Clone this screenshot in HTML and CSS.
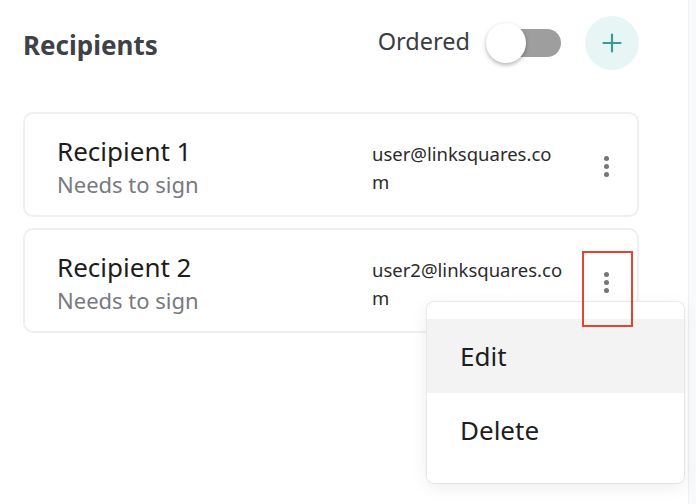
FILE: index.html
```html
<!DOCTYPE html>
<html lang="en">
<head>
	<meta charset="UTF-8">
	<title>Recipients</title>
	<link rel="stylesheet" href="styles.css">
</head>
<body>
	<div class="page">
		<div class="panel">
			<div class="head">
				<h2 class="title">Recipients</h2>
				<span class="ordered">Ordered</span>
				<span class="toggle"><span class="knob"></span></span>
				<a href="javascript:" class="add">
					<svg width="22" height="22" viewBox="0 0 22 22"><path d="M11 2.5v17M2.5 11h17" stroke="#3c9a9b" stroke-width="2.2" stroke-linecap="round" fill="none"/></svg>
				</a>
			</div>

			<ul class="list">
				<li class="card">
					<div class="who">
						<div class="name">Recipient 1</div>
						<div class="role">Needs to sign</div>
					</div>
					<div class="mail">user@linksquares.co<br>m</div>
					<span class="more"><i></i><i></i><i></i></span>
				</li>
				<li class="card">
					<div class="who">
						<div class="name">Recipient 2</div>
						<div class="role">Needs to sign</div>
					</div>
					<div class="mail">user2@linksquares.co<br>m</div>
					<span class="more"><i></i><i></i><i></i></span>
					<span class="mark"></span>
					<ul class="menu">
						<li class="on">Edit</li>
						<li>Delete</li>
					</ul>
				</li>
			</ul>
		</div>
		<div class="side"></div>
	</div>
</body>
</html>
```
FILE: styles.css
```css
*{
	margin:0;
	padding:0;
	box-sizing:border-box;
}
body{
	background:#fff;
	font-family:"Noto Sans","Open Sans",sans-serif;
	color:#1f1f1f;
}
ul{
	list-style:none;
}
.page{
	display:flex;
	height:504px;
	overflow:hidden;
}
.panel{
	width:688px;
	padding:0 49px 0 23px;
}
.side{
	flex:1;
	border-left:1px solid #eef0f3;
	background:#f9fafb;
}

/* header */
.head{
	display:flex;
	align-items:center;
	height:86px;
}
.title{
	flex:1;
	font-size:26px;
	font-weight:700;
	color:#3f4149;
	padding-top:3px;
}
.ordered{
	font-size:23.5px;
	color:#3a3d44;
	margin-right:17px;
	margin-bottom:5px;
}
.toggle{
	position:relative;
	width:74px;
	height:28px;
	border-radius:14px;
	background:#9e9e9e;
	margin-right:24px;
}
.knob{
	position:absolute;
	left:-1px;
	top:-6px;
	width:40px;
	height:40px;
	border-radius:50%;
	background:#fff;
	box-shadow:0 2px 4px rgba(0,0,0,.3);
}
.add{
	display:flex;
	align-items:center;
	justify-content:center;
	width:54px;
	height:54px;
	border-radius:50%;
	background:#e8f5f5;
}

/* cards */
.list{
	margin-top:26px;
	display:flex;
	flex-direction:column;
	gap:11px;
}
.card{
	position:relative;
	display:flex;
	align-items:center;
	height:105px;
	padding-left:32px;
	border:2px solid #efefef;
	border-radius:10px;
}
.who{
	flex:1;
	margin-top:5px;
}
.name{
	font-size:26px;
	line-height:34px;
	color:#1d1d1d;
}
.role{
	font-size:22px;
	line-height:32px;
	color:#777a80;
}
.mail{
	width:211px;
	font-size:18.5px;
	line-height:28px;
	color:#2b2b2b;
	white-space:nowrap;
	margin-top:6px;
}
.more{
	display:flex;
	flex-direction:column;
	gap:3px;
	width:46px;
	align-items:center;
	margin-right:8px;
	margin-top:4px;
}
.more i{
	width:5px;
	height:5px;
	border-radius:50%;
	background:#757575;
}
.mark{
	position:absolute;
	left:557px;
	top:21px;
	width:51px;
	height:76px;
	border:2.5px solid #e5432f;
	z-index:2;
}
.menu{
	position:absolute;
	left:402px;
	top:72px;
	width:257px;
	padding:17px 0 16px;
	background:#fff;
	border-radius:7px;
	box-shadow:0 4px 18px rgba(0,0,0,.08), 0 0 0 1px #f0f0f0;
	z-index:1;
}
.menu li{
	height:74px;
	line-height:74px;
	padding-left:33px;
	font-size:26px;
	color:#1e1e1e;
}
.menu .on{
	background:#f3f3f3;
}
```
